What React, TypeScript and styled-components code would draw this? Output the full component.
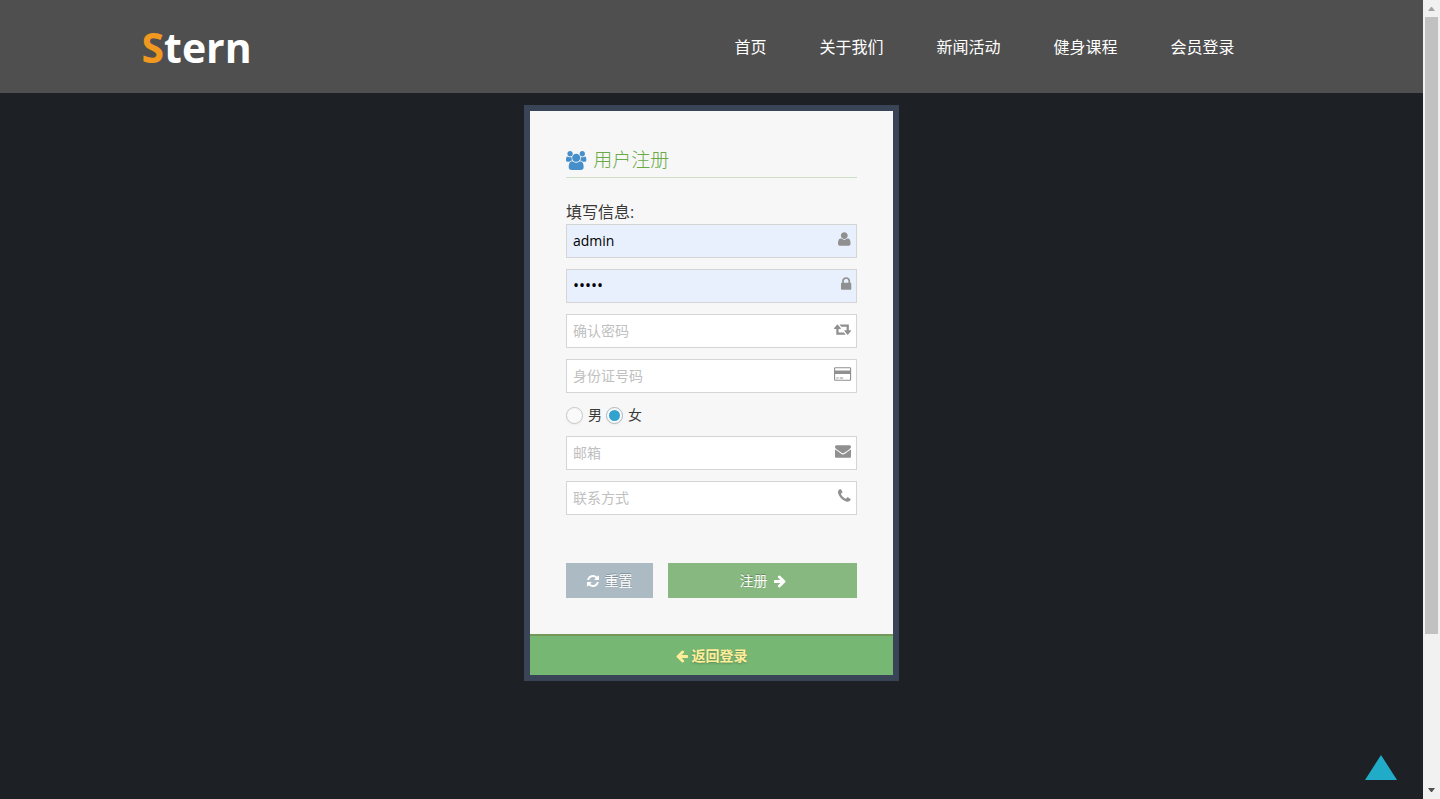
import React from "react";
import styled, { createGlobalStyle } from "styled-components";

const GlobalStyle = createGlobalStyle`
  *, *::before, *::after { box-sizing: border-box; }
  body {
    margin: 0;
    background: #1d2024;
    color: #393939;
    font-family: "Open Sans", "Noto Sans CJK SC", sans-serif;
    font-size: 14px;
    line-height: 20px;
  }
  button, input { font: inherit; }
  a { text-decoration: none; }
`;

type Glyph = { width: number; path: string };

const glyphs: Record<string, Glyph> = {
  users: {
    width: 1920,
    path: "M593 896q-162 5-265 128h-134q-82 0-138-40.5t-56-118.500q0-353 124-353 6 0 43.500 21t97.500 42.500 119 21.500q67 0 133-23-5 37-5 66 0 139 81 256zm1071 637q0 120-73 189.500t-194 69.500h-874q-121 0-194-69.500t-73-189.500q0-53 3.500-103.500t14-109 26.500-108.500 43-97.500 62-81 85.500-53.500 111.500-20q10 0 43 21.500t73 48 107 48 135 21.500 135-21.500 107-48 73-48 43-21.500q61 0 111.500 20t85.500 53.500 62 81 43 97.500 26.500 108.500 14 109 3.500 103.500zm-1024-1277q0 106-75 181t-181 75-181-75-75-181 75-181 181-75 181 75 75 181zm704 384q0 159-112.500 271.500t-271.500 112.500-271.500-112.500-112.500-271.500 112.500-271.500 271.500-112.500 271.500 112.500 112.500 271.500zm576 225q0 78-56 118.500t-138 40.500h-134q-103-123-265-128 81-117 81-256 0-29-5-66 66 23 133 23 59 0 119-21.500t97.500-42.500 43.500-21q124 0 124 353zm-128-609q0 106-75 181t-181 75-181-75-75-181 75-181 181-75 181 75 75 181z",
  },
  user: {
    width: 1408,
    path: "M1408 1405q0 120-73 189.500t-194 69.500h-874q-121 0-194-69.500t-73-189.500q0-53 3.500-103.500t14-109 26.500-108.500 43-97.500 62-81 85.500-53.500 111.500-20q9 0 42 21.500t74.500 48 108 48 133.500 21.500 133.500-21.500 108-48 74.500-48 42-21.500q61 0 111.500 20t85.500 53.500 62 81 43 97.500 26.500 108.500 14 109 3.500 103.500zm-320-893q0 159-112.500 271.500t-271.500 112.500-271.500-112.500-112.500-271.500 112.500-271.500 271.500-112.500 271.500 112.500 112.500 271.500z",
  },
  lock: {
    width: 1152,
    path: "M320 768h512v-192q0-106-75-181t-181-75-181 75-75 181v192zm832 96v576q0 40-28 68t-68 28h-960q-40 0-68-28t-28-68v-576q0-40 28-68t68-28h32v-192q0-184 132-316t316-132 316 132 132 316v192h32q40 0 68 28t28 68z",
  },
  retweet: {
    width: 1920,
    path: "M1280 1504q0 13-9.500 22.500t-22.500 9.500h-960q-8 0-13.500-2t-9-7-5.500-8-3-11.500-1-11.500v-600h-192q-26 0-45-19t-19-45q0-24 15-41l320-384q19-22 49-22t49 22l320 384q15 17 15 41 0 26-19 45t-45 19h-192v384h576q16 0 25 11l160 192q7 10 7 21zm640-416q0 24-15 41l-320 384q-20 23-49 23t-49-23l-320-384q-15-17-15-41 0-26 19-45t45-19h192v-384h-576q-16 0-25-12l-160-192q-7-9-7-20 0-13 9.500-22.500t22.500-9.500h960q8 0 13.500 2t9 7 5.500 8 3 11.500 1 11.500v600h192q26 0 45 19t19 45z",
  },
  card: {
    width: 1920,
    path: "M1760 128q66 0 113 47t47 113v1216q0 66-47 113t-113 47h-1600q-66 0-113-47t-47-113v-1216q0-66 47-113t113-47h1600zm-1600 128q-13 0-22.500 9.500t-9.500 22.500v224h1664v-224q0-13-9.500-22.500t-22.500-9.500h-1600zm1600 1280q13 0 22.500-9.500t9.500-22.500v-608h-1664v608q0 13 9.500 22.500t22.500 9.500h1600zm-1504-128v-128h256v128h-256zm384 0v-128h384v128h-384z",
  },
  envelope: {
    width: 1792,
    path: "M1792 710v794q0 66-47 113t-113 47h-1472q-66 0-113-47t-47-113v-794q44 49 101 87 362 246 497 345 57 42 92.500 65.500t94.500 48 110 24.500h2q51 0 110-24.500t94.500-48 92.500-65.500q170-123 498-345 57-39 100-87zm0-294q0 79-49 151t-122 123q-376 261-468 325-10 7-42.500 31t-54 38.500-52 32.500-57.500 27-50 9h-2q-23 0-50-9t-57.500-27-52-32.500-54-38.500-42.500-31q-91-64-262-182.500t-205-142.500q-62-42-117-115.500t-55-136.500q0-78 41.500-130t118.500-52h1472q65 0 112.500 47t47.500 113z",
  },
  phone: {
    width: 1408,
    path: "M1408 1240q0 27-10 70.500t-21 68.500q-21 50-122 106-94 51-186 51-27 0-53-3.500t-57.500-12.500-47-14.500-55.500-20.500-49-18q-98-35-175-83-127-79-264-216t-216-264q-48-77-83-175-3-9-18-49t-20.500-55.500-14.500-47-12.500-57.500-3.500-53q0-92 51-186 56-101 106-122 25-11 68.500-21t70.500-10q14 0 21 3 18 6 53 76 11 19 30 54t35 63.500 31 53.500q3 4 17.500 25t21.500 35.500 7 28.500q0 20-28.500 50t-62 55-62 53-28.500 46q0 9 5 22.500t8.500 20.500 14 24 11.500 19q76 137 174 235t235 174q2 1 19 11.500t24 14 20.500 8.500 22.500 5q18 0 46-28.500t53-62 55-62 50-28.500q14 0 28.500 7t35.500 21.500 25 17.500q25 15 53.500 31t63.500 35 54 30q70 35 76 53 3 7 3 21z",
  },
  refresh: {
    width: 1536,
    path: "M1511 1056q0 5-1 7-64 268-268 434.500t-478 166.500q-146 0-282.500-55t-243.500-157l-129 129q-19 19-45 19t-45-19-19-45v-448q0-26 19-45t45-19h448q26 0 45 19t19 45-19 45l-137 137q71 66 161 102t187 36q134 0 250-65t186-179q11-17 53-117 8-23 30-23h192q13 0 22.500 9.500t9.500 22.500zm25-800v448q0 26-19 45t-45 19h-448q-26 0-45-19t-19-45 19-45l138-138q-148-137-349-137-134 0-250 65t-186 179q-11 17-53 117-8 23-30 23h-199q-13 0-22.500-9.500t-9.500-22.500v-7q65-268 270-434.500t480-166.500q146 0 284 55.500t245 156.500l130-129q19-19 45-19t45 19 19 45z",
  },
  arrowRight: {
    width: 1536,
    path: "M1472 960q0 54-37 91l-651 651q-39 37-91 37-51 0-90-37l-75-75q-38-38-38-91t38-91l293-293h-704q-52 0-84.500-37.500t-32.500-90.500v-128q0-53 32.500-90.500t84.500-37.500h704l-293-294q-38-36-38-90t38-90l75-75q38-38 90-38 53 0 91 38l651 651q37 35 37 90z",
  },
  arrowLeft: {
    width: 1536,
    path: "M1536 896v128q0 53-32.500 90.500t-84.500 37.500h-704l293 294q38 36 38 90t-38 90l-75 76q-37 37-90 37-52 0-91-37l-651-652q-37-37-37-90 0-52 37-91l651-650q38-38 91-38 52 0 90 38l75 74q38 38 38 91t-38 91l-293 293h704q52 0 84.500 37.500t32.500 90.500z",
  },
};

const GlyphSvg = styled.svg<{ $size: number }>`
  display: block;
  flex: none;
  height: ${(p) => p.$size}px;
  fill: currentColor;
  overflow: visible;
`;

function Icon({ name, size = 14 }: { name: string; size?: number }) {
  const glyph = glyphs[name];
  return (
    <GlyphSvg $size={size} viewBox={`0 0 ${glyph.width} 1792`} aria-hidden="true">
      <path d={glyph.path} />
    </GlyphSvg>
  );
}

const Shell = styled.div`
  display: flex;
  min-height: 100vh;
`;

const Page = styled.div`
  flex: 1;
  min-width: 0;
`;

const Header = styled.header`
  background: #4f4f4f;
`;

const HeaderInner = styled.div`
  display: flex;
  align-items: center;
  justify-content: space-between;
  max-width: 1140px;
  min-height: 93px;
  margin: 0 auto;
  padding-right: 47px;
`;

const Logo = styled.a`
  color: #fff;
  font-size: 41px;
  font-weight: 700;
  line-height: 60px;
`;

const LogoAccent = styled.span`
  color: #f09820;
`;

const Nav = styled.nav`
  display: flex;
  gap: 53px;
`;

const NavLink = styled.a`
  color: #fff;
  font-size: 16px;
  line-height: 24px;
`;

const Main = styled.main`
  display: flex;
  justify-content: center;
  padding: 12px 0;
`;

const Card = styled.section`
  width: 375px;
  border: 6px solid #394557;
  background: #f7f7f7;
`;

const Form = styled.form`
  padding: 36px;
`;

const Title = styled.h1`
  display: flex;
  align-items: center;
  gap: 7px;
  margin: 0 0 24px;
  padding-bottom: 4px;
  border-bottom: 1px solid #cee0c4;
  color: #69aa46;
  font-size: 19px;
  font-weight: 300;
  line-height: 26px;
`;

const TitleIcon = styled.span`
  color: #478fca;
`;

const Intro = styled.p`
  margin: 0;
  padding-bottom: 2px;
  font-size: 16px;
  line-height: 20px;
`;

const Fields = styled.div`
  display: flex;
  flex-direction: column;
  gap: 11px;
`;

const Field = styled.label`
  position: relative;
  display: block;
  color: #909090;
`;

const TextInput = styled.input<{ $filled?: boolean }>`
  display: block;
  width: 100%;
  height: 34px;
  padding: 0 30px 2px 6px;
  border: 1px solid #d5d5d5;
  border-radius: 0;
  outline: 0;
  background: ${(p) => (p.$filled ? "#e8f0fe" : "#fff")};
  color: #000;
  &[type="password"]:not(:placeholder-shown) {
    font-size: 16px;
  }
  &::placeholder {
    color: #c0c0c0;
    opacity: 1;
  }
`;

const FieldIcon = styled.span`
  position: absolute;
  top: 7px;
  right: 6px;
`;

const Choices = styled.div`
  display: flex;
  gap: 4px;
  padding-top: 1px;
`;

const Choice = styled.label`
  display: flex;
  align-items: center;
  gap: 5px;
  line-height: 20px;
`;

const Radio = styled.input`
  display: grid;
  place-items: center;
  width: 17px;
  height: 17px;
  margin: 0;
  appearance: none;
  border: 1px solid #c8c8c8;
  border-radius: 50%;
  background: #fafafa;
  box-shadow: 0 1px 2px rgba(0, 0, 0, 0.05);
  &:checked {
    border-color: #adb8c0;
  }
  &:checked::before {
    content: "";
    width: 11px;
    height: 11px;
    border-radius: 50%;
    background: #32a3ce;
  }
`;

const Actions = styled.div`
  display: flex;
  gap: 15px;
  margin-top: 48px;
`;

const ActionButton = styled.button<{ $tone: string; $grow?: boolean }>`
  display: flex;
  flex: ${(p) => (p.$grow ? "1" : "0 0 87px")};
  align-items: center;
  justify-content: center;
  gap: 6px;
  height: 35px;
  padding: 0;
  border: 0;
  background: ${(p) => p.$tone};
  color: #fff;
  text-shadow: 0 -1px 0 rgba(0, 0, 0, 0.25);
  cursor: pointer;
`;

const BackBar = styled.a`
  display: flex;
  align-items: center;
  justify-content: center;
  gap: 4px;
  height: 41px;
  border-top: 2px solid #759759;
  background: #76b774;
  color: #fe9;
  font-weight: 700;
  text-shadow: 0 1px 2px rgba(0, 0, 0, 0.25);
`;

const ToTop = styled.a`
  position: fixed;
  right: 43px;
  bottom: 19px;
`;

const TopArrow = styled.svg`
  display: block;
  width: 32px;
  height: 25px;
  fill: #20acc8;
`;

const ScrollTrack = styled.div`
  position: sticky;
  top: 0;
  display: flex;
  flex: 0 0 17px;
  flex-direction: column;
  height: 100vh;
  padding: 0 2px;
  background: #f1f1f1;
`;

const ScrollArrow = styled.svg<{ $color: string }>`
  display: block;
  flex: none;
  width: 13px;
  height: 17px;
  fill: ${(p) => p.$color};
`;

const ScrollLane = styled.div`
  display: flex;
  flex: 1;
  flex-direction: column;
`;

const ScrollThumb = styled.div`
  flex: 0 0 80.6%;
  background: #c1c1c1;
`;

type FieldSpec = { label: string; icon: string; type: string; value?: string };

const accountFields: FieldSpec[] = [
  { label: "用户名", icon: "user", type: "text", value: "admin" },
  { label: "密码", icon: "lock", type: "password", value: "admin" },
  { label: "确认密码", icon: "retweet", type: "password" },
  { label: "身份证号码", icon: "card", type: "text" },
];

const contactFields: FieldSpec[] = [
  { label: "邮箱", icon: "envelope", type: "email" },
  { label: "联系方式", icon: "phone", type: "tel" },
];

function FormField({ label, icon, type, value }: FieldSpec) {
  return (
    <Field>
      <TextInput
        type={type}
        aria-label={label}
        placeholder={label}
        defaultValue={value}
        $filled={Boolean(value)}
      />
      <FieldIcon>
        <Icon name={icon} size={16} />
      </FieldIcon>
    </Field>
  );
}

const navItems = ["首页", "关于我们", "新闻活动", "健身课程", "会员登录"];

export default function App() {
  return (
    <Shell>
      <GlobalStyle />
      <Page>
        <Header>
          <HeaderInner>
            <Logo href="#">
              <LogoAccent>S</LogoAccent>tern
            </Logo>
            <Nav>
              {navItems.map((item) => (
                <NavLink key={item} href="#">
                  {item}
                </NavLink>
              ))}
            </Nav>
          </HeaderInner>
        </Header>
        <Main>
          <Card>
            <Form onSubmit={(e) => e.preventDefault()}>
              <Title>
                <TitleIcon>
                  <Icon name="users" size={19} />
                </TitleIcon>
                用户注册
              </Title>
              <Intro>填写信息:</Intro>
              <Fields>
                {accountFields.map((f) => (
                  <FormField key={f.label} {...f} />
                ))}
                <Choices role="radiogroup" aria-label="性别">
                  <Choice>
                    <Radio type="radio" name="gender" value="male" />男
                  </Choice>
                  <Choice>
                    <Radio type="radio" name="gender" value="female" defaultChecked />女
                  </Choice>
                </Choices>
                {contactFields.map((f) => (
                  <FormField key={f.label} {...f} />
                ))}
              </Fields>
              <Actions>
                <ActionButton type="reset" $tone="#abbac3">
                  <Icon name="refresh" />
                  重置
                </ActionButton>
                <ActionButton type="submit" $tone="#87b87f" $grow>
                  注册
                  <Icon name="arrowRight" />
                </ActionButton>
              </Actions>
            </Form>
            <BackBar href="#">
              <Icon name="arrowLeft" />
              返回登录
            </BackBar>
          </Card>
        </Main>
        <ToTop href="#" aria-label="返回顶部">
          <TopArrow viewBox="0 0 32 25">
            <path d="M16 0L32 25H0z" />
          </TopArrow>
        </ToTop>
      </Page>
      <ScrollTrack aria-hidden="true">
        <ScrollArrow $color="#a3a3a3" viewBox="0 0 13 17">
          <path d="M6 7h1l3 4H3z" />
        </ScrollArrow>
        <ScrollLane>
          <ScrollThumb />
        </ScrollLane>
        <ScrollArrow $color="#505050" viewBox="0 0 13 17">
          <path d="M3 6h7l-3 4H6z" />
        </ScrollArrow>
      </ScrollTrack>
    </Shell>
  );
}
